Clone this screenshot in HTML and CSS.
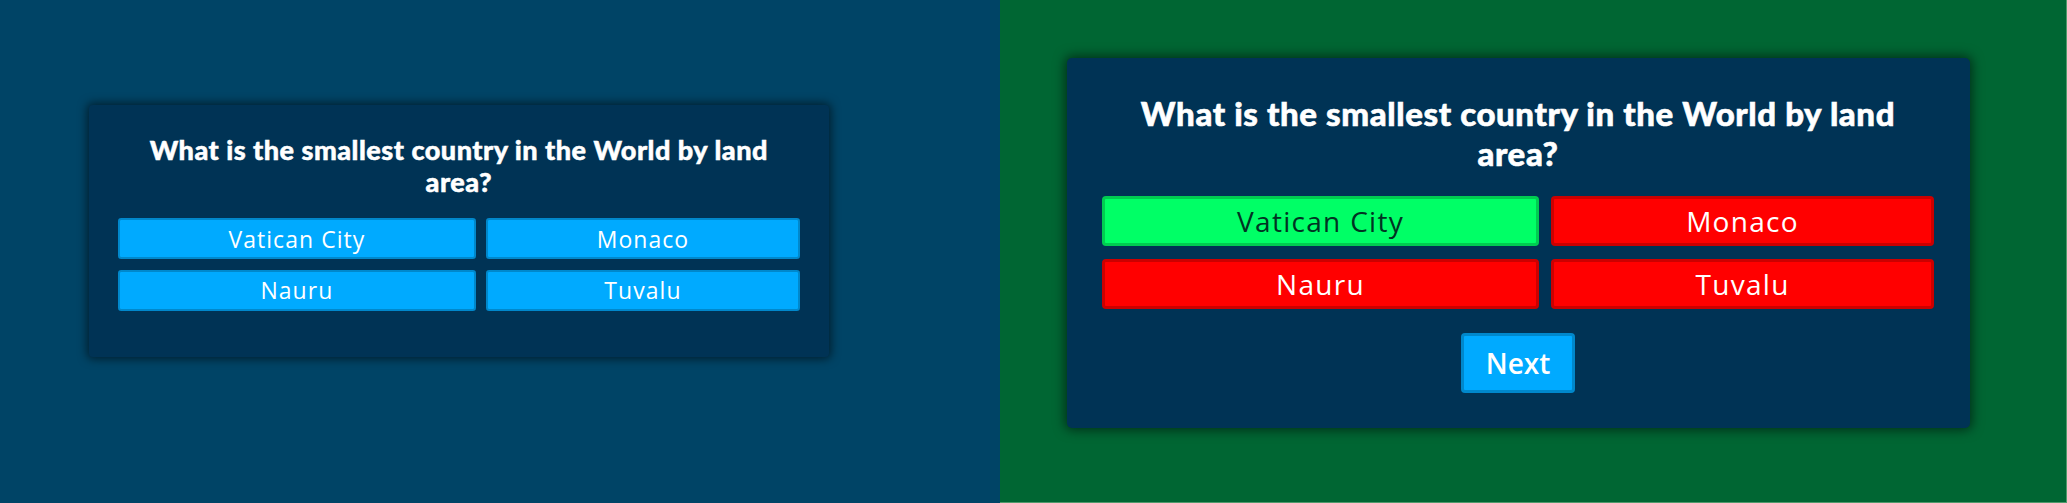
FILE: index.html
```html
<!DOCTYPE html>
<html lang="en">
<head>
<meta charset="utf-8">
<title>Quiz</title>
<link rel="stylesheet" href="styles.css">
</head>
<body>
<main class="stage">
  <section class="pane pane--blue">
    <div class="card card--waiting">
      <h2 class="question">What is the smallest country in the World by land<br>area?</h2>
      <div class="answers">
        <button class="answer">Vatican City</button>
        <button class="answer">Monaco</button>
        <button class="answer">Nauru</button>
        <button class="answer">Tuvalu</button>
      </div>
    </div>
  </section>
  <section class="pane pane--green">
    <div class="card">
      <h2 class="question">What is the smallest country in the World by land<br>area?</h2>
      <div class="answers">
        <button class="answer answer--correct">Vatican City</button>
        <button class="answer answer--wrong">Monaco</button>
        <button class="answer answer--wrong">Nauru</button>
        <button class="answer answer--wrong">Tuvalu</button>
      </div>
      <button class="next">Next</button>
    </div>
  </section>
</main>
</body>
</html>
```
FILE: styles.css
```css
html, body {
  margin: 0;
  padding: 0;
}
body {
  width: 2067px;
  height: 503px;
  overflow: hidden;
}
.stage {
  display: flex;
  height: 503px;
}
.pane {
  box-sizing: border-box;
  height: 503px;
  display: flex;
  align-items: flex-start;
}
.pane--blue {
  width: 1000px;
  background: #004466;
  padding: 105px 0 0 89px;
}
.pane--green {
  width: 1067px;
  background: #006633;
  padding: 58px 0 0 67px;
  border-right: 1px solid #4f9a6c;
  border-bottom: 1px solid #4f9a6c;
}
.card {
  box-sizing: border-box;
  width: 903px;
  padding: 35px 36px 35px 35px;
  background: #003355;
  border-radius: 5px;
  box-shadow: 0 0 12px 2px rgba(0, 0, 0, 0.55);
}
.card--waiting {
  zoom: 0.82;
  padding-bottom: 56px;
}
.question {
  margin: 0 0 23px;
  font-family: "Lato", "Open Sans", sans-serif;
  font-weight: 900;
  font-size: 33px;
  letter-spacing: 0.6px;
  line-height: 40px;
  color: #ffffff;
  -webkit-text-stroke: 0.6px #ffffff;
  text-align: center;
}
.answers {
  display: grid;
  grid-template-columns: auto auto;
  column-gap: 12px;
  row-gap: 13px;
}
.answer {
  box-sizing: border-box;
  height: 50px;
  margin: 0;
  padding: 0 10px;
  border: 3px solid rgba(0, 0, 0, 0.2);
  border-radius: 4px;
  background: #00aaff;
  color: #ffffff;
  font-family: "Open Sans", "Noto Sans", sans-serif;
  font-weight: 400;
  font-size: 28px;
  letter-spacing: 1.3px;
  line-height: 44px;
  text-align: center;
  white-space: nowrap;
}
.answer--correct {
  background: #00ff66;
  color: #003322;
}
.answer--wrong {
  background: #ff0000;
  color: #ffffff;
}
.next {
  display: block;
  box-sizing: border-box;
  height: 60px;
  margin: 24px auto 0;
  padding: 0 22px;
  border: 3px solid rgba(0, 0, 0, 0.2);
  border-radius: 4px;
  background: #00aaff;
  color: #ffffff;
  font-family: "Open Sans", "Noto Sans", sans-serif;
  font-weight: 600;
  font-size: 28px;
  line-height: 54px;
}
```
